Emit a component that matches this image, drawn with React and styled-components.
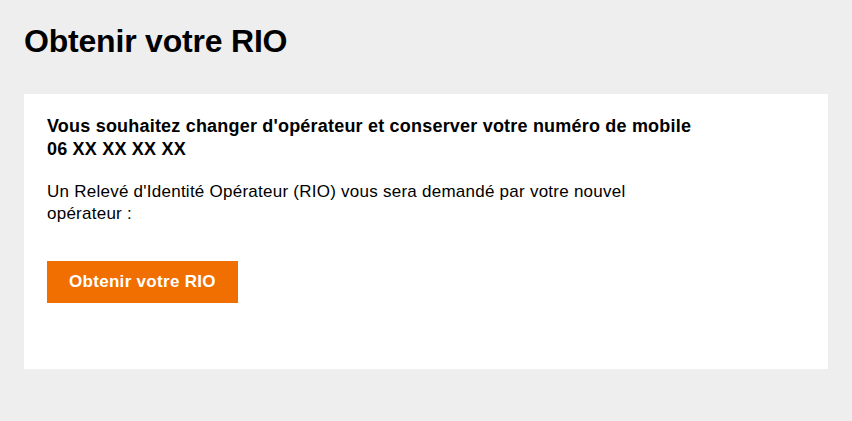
import React from 'react';
import styled, { createGlobalStyle } from 'styled-components';

const GlobalStyle = createGlobalStyle`
  body {
    margin: 0;
    background: #eeeeee;
    font-family: "Liberation Sans", Arial, sans-serif;
    color: #000;
  }
`;

const Page = styled.div`
  padding: 21px 24px 52px;
`;

const Title = styled.h1`
  margin: 0 0 33px;
  font-size: 32px;
  line-height: 40px;
  font-weight: 700;
  letter-spacing: -0.2px;
`;

const Card = styled.section`
  background: #fff;
  padding: 21px 23px 66px;
`;

const Lead = styled.p`
  margin: 0;
  font-size: 18px;
  line-height: 23px;
  font-weight: 700;
  letter-spacing: 0.2px;
`;

const Text = styled.p`
  margin: 20px 0 0;
  max-width: 620px;
  font-size: 17px;
  line-height: 22px;
  letter-spacing: 0.25px;
`;

const Button = styled.button`
  display: block;
  margin-top: 36px;
  height: 42px;
  padding: 0 22px;
  border: 0;
  background: #f16e00;
  color: #fff;
  font-family: inherit;
  font-size: 17px;
  font-weight: 700;
  letter-spacing: 0.3px;
  cursor: pointer;
`;

const App = () => {
  return (
    <Page>
      <GlobalStyle />
      <Title>Obtenir votre RIO</Title>
      <Card>
        <Lead>
          Vous souhaitez changer d'opérateur et conserver votre numéro de mobile
          <br />
          06 XX XX XX XX
        </Lead>
        <Text>
          Un Relevé d'Identité Opérateur (RIO) vous sera demandé par votre nouvel
          opérateur :
        </Text>
        <Button>Obtenir votre RIO</Button>
      </Card>
    </Page>
  );
};

export default App;
